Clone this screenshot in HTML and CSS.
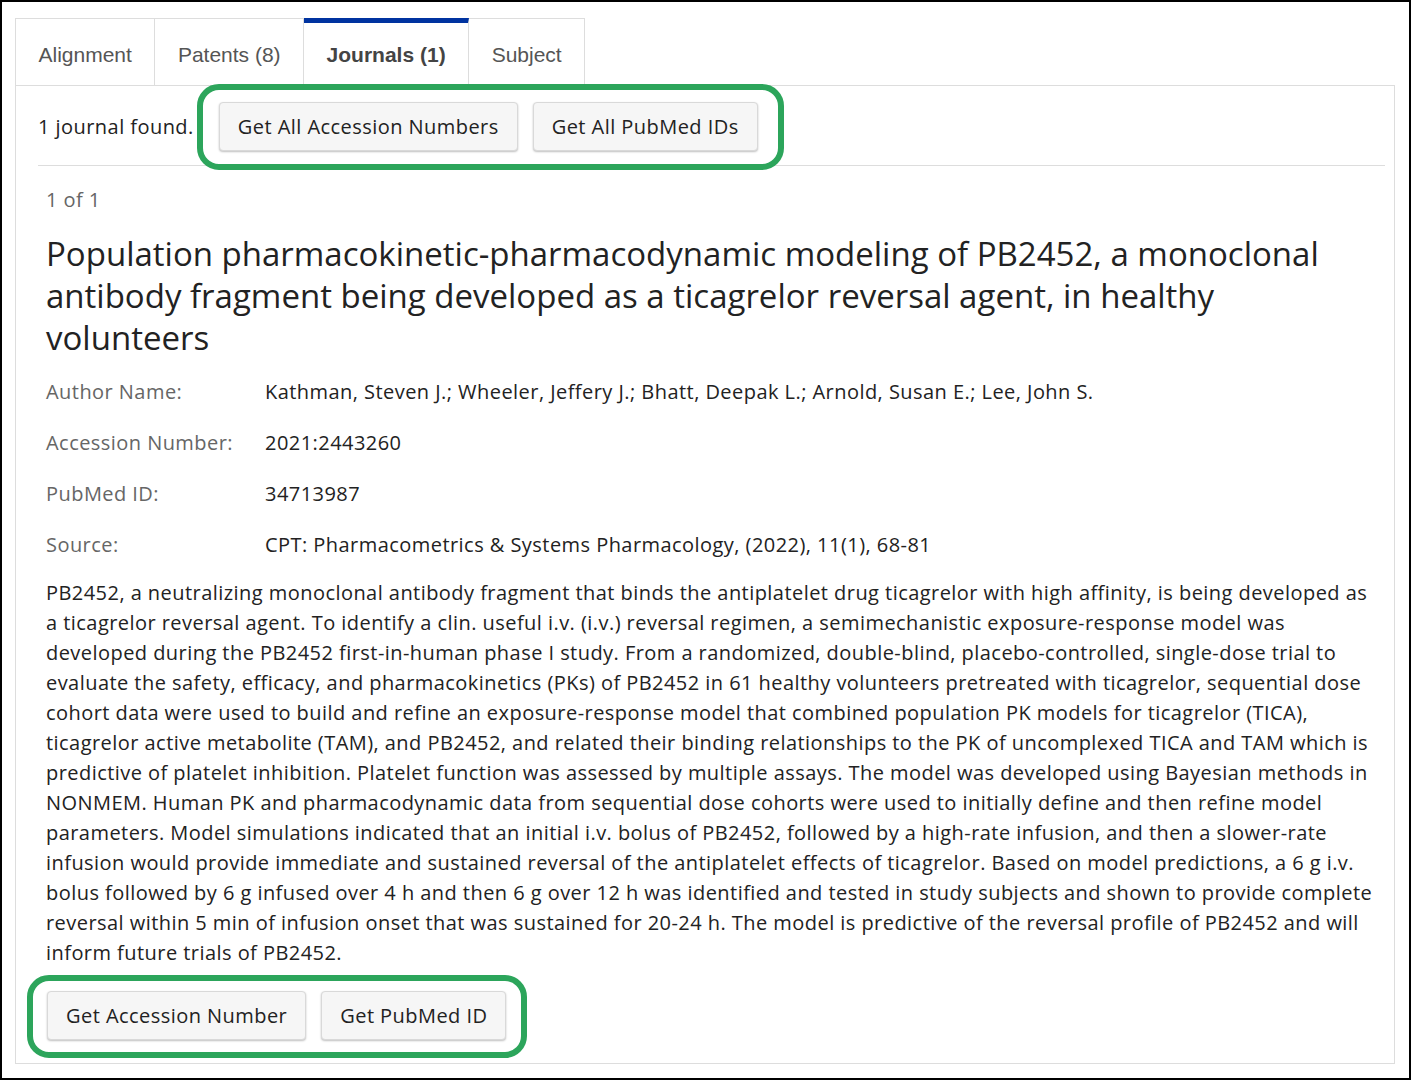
FILE: index.html
```html
<!DOCTYPE html>
<html>
<head>
<meta charset="utf-8">
<link rel="stylesheet" href="styles.css">
</head>
<body>
<div class="frame">
  <div class="tabs">
    <div class="tab">Alignment</div>
    <div class="tab">Patents (8)</div>
    <div class="tab active">Journals (1)</div>
    <div class="tab">Subject</div>
    <div class="tab-fill"></div>
  </div>
  <div class="panel">
    <div class="header">
      <span class="found">1 journal found.</span>
      <div class="btn-group highlight-top">
        <button class="btn">Get All Accession Numbers</button>
        <button class="btn">Get All PubMed IDs</button>
      </div>
    </div>
    <div class="article">
      <div class="count">1 of 1</div>
      <h1 class="title">Population pharmacokinetic-pharmacodynamic modeling of PB2452, a monoclonal antibody fragment being developed as a ticagrelor reversal agent, in healthy volunteers</h1>
      <div class="meta">
        <div class="row"><span class="label">Author Name:</span><span class="value">Kathman, Steven J.; Wheeler, Jeffery J.; Bhatt, Deepak L.; Arnold, Susan E.; Lee, John S.</span></div>
        <div class="row"><span class="label">Accession Number:</span><span class="value">2021:2443260</span></div>
        <div class="row"><span class="label">PubMed ID:</span><span class="value">34713987</span></div>
        <div class="row"><span class="label">Source:</span><span class="value">CPT: Pharmacometrics &amp; Systems Pharmacology, (2022), 11(1), 68-81</span></div>
      </div>
      <p class="abstract">PB2452, a neutralizing monoclonal antibody fragment that binds the antiplatelet drug ticagrelor with high affinity, is being developed as a ticagrelor reversal agent. To identify a clin. useful i.v. (i.v.) reversal regimen, a semimechanistic exposure-response model was developed during the PB2452 first-in-human phase I study. From a randomized, double-blind, placebo-controlled, single-dose trial to evaluate the safety, efficacy, and pharmacokinetics (PKs) of PB2452 in 61 healthy volunteers pretreated with ticagrelor, sequential dose cohort data were used to build and refine an exposure-response model that combined population PK models for ticagrelor (TICA), ticagrelor active metabolite (TAM), and PB2452, and related their binding relationships to the PK of uncomplexed TICA and TAM which is predictive of platelet inhibition. Platelet function was assessed by multiple assays. The model was developed using Bayesian methods in NONMEM. Human PK and pharmacodynamic data from sequential dose cohorts were used to initially define and then refine model parameters. Model simulations indicated that an initial i.v. bolus of PB2452, followed by a high-rate infusion, and then a slower-rate infusion would provide immediate and sustained reversal of the antiplatelet effects of ticagrelor. Based on model predictions, a 6 g i.v. bolus followed by 6 g infused over 4 h and then 6 g over 12 h was identified and tested in study subjects and shown to provide complete reversal within 5 min of infusion onset that was sustained for 20-24 h. The model is predictive of the reversal profile of PB2452 and will inform future trials of PB2452.</p>
      <div class="btn-group highlight-bottom">
        <button class="btn">Get Accession Number</button>
        <button class="btn">Get PubMed ID</button>
      </div>
    </div>
  </div>
</div>
</body>
</html>
```
FILE: styles.css
```css
* { box-sizing: border-box; }
html, body { margin: 0; padding: 0; background: #fff; }
.frame {
  width: 1411px;
  height: 1080px;
  border: 2px solid #000;
  padding: 16px 14px 14px 13px;
  display: flex;
  flex-direction: column;
  font-family: "Open Sans", "Liberation Sans", sans-serif;
  color: #222;
  letter-spacing: 0.45px;
}
.tabs {
  display: flex;
  height: 68px;
  flex: none;
  letter-spacing: 0;
}
.tab {
  font-family: "Liberation Sans", Arial, sans-serif;
  font-size: 21px;
  color: #555;
  padding: 6px 22.5px 0;
  border: 1px solid #ddd;
  border-left: none;
  display: flex;
  align-items: center;
}
.tab:first-child { border-left: 1px solid #ddd; }
.tab.active {
  font-weight: bold;
  color: #444;
  border-top: 5px solid #0033a0;
  border-bottom-color: #fff;
  padding-top: 2px;
}
.tab-fill {
  flex: 1;
  border-bottom: 1px solid #ddd;
}
.panel {
  flex: 1;
  border: 1px solid #ddd;
  border-top: none;
}
.header {
  display: flex;
  align-items: center;
  margin: 0 9px 0 22px;
  padding: 16px 0 14px;
  border-bottom: 1px solid #ddd;
}
.found {
  font-size: 20px;
  margin-right: 25px;
}
.btn-group {
  display: flex;
  gap: 15px;
  position: relative;
  width: fit-content;
}
.btn {
  font-family: "Open Sans", "Liberation Sans", sans-serif;
  font-size: 20px;
  letter-spacing: 0.45px;
  line-height: 27px;
  color: #222;
  background: #f6f6f6;
  border: 1px solid #d9d9d9;
  border-radius: 4px;
  padding: 10px 18px;
  box-shadow: 0 1px 2px rgba(0,0,0,0.25);
  cursor: pointer;
}
.highlight-top::before,
.highlight-bottom::before {
  content: "";
  position: absolute;
  border: 6px solid #2ca55b;
  border-radius: 22px;
  pointer-events: none;
}
.highlight-top::before { left: -22px; right: -26px; top: -18px; bottom: -19px; }
.highlight-bottom::before { left: -20px; right: -21px; top: -16px; bottom: -18px; }
.article {
  padding: 20px 16px 22px 30px;
}
.count {
  font-size: 20px;
  line-height: 27px;
  color: #666;
}
.title {
  font-weight: normal;
  font-size: 33px;
  letter-spacing: 0;
  line-height: 42px;
  margin: 20px 0 19px;
  color: #222;
}
.meta .row {
  display: flex;
  font-size: 20px;
  line-height: 27px;
  margin-bottom: 24px;
}
.label {
  width: 219px;
  flex: none;
  color: #666;
}
.value { color: #222; }
.meta .row:last-child { margin-bottom: 0; }
.abstract {
  font-size: 20px;
  line-height: 30px;
  margin: 20px 0 23px;
}
.highlight-bottom { margin-left: 1px; }
```
